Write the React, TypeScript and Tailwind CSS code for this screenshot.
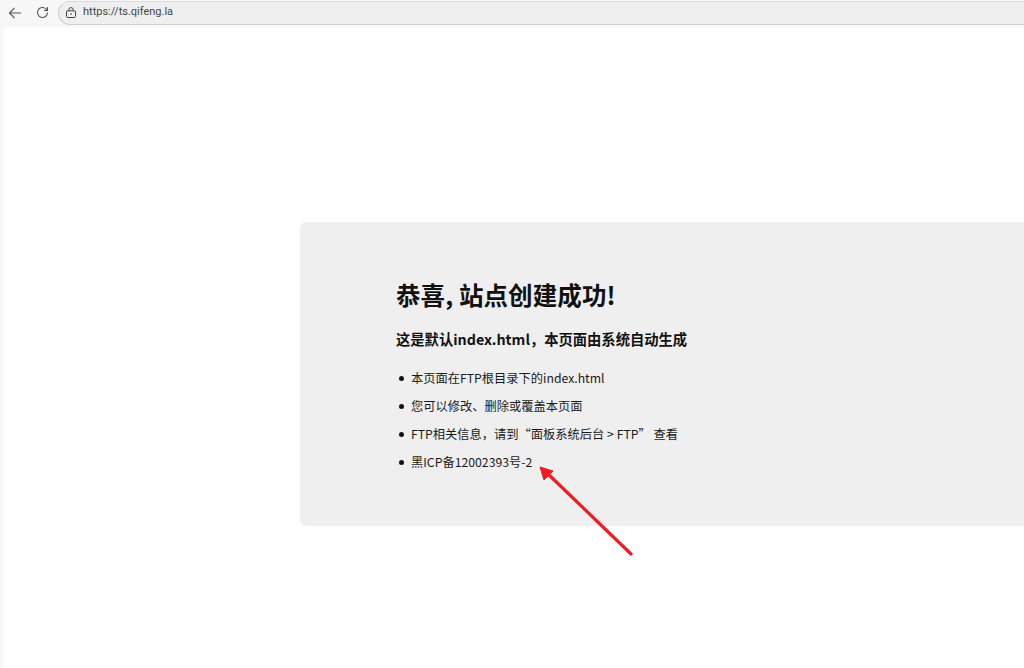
export default function App() {
  const items = [
    "本页面在FTP根目录下的index.html",
    "您可以修改、删除或覆盖本页面",
    "FTP相关信息，请到“面板系统后台 > FTP” 查看",
    "黑ICP备12002393号-2",
  ];
  return (
    <div className="relative flex h-[668px] w-[1024px] flex-col overflow-hidden bg-[#f7f7f7] font-['Noto_Sans_CJK_SC',sans-serif] text-[#111]">
      <div className="flex h-[27px] shrink-0 items-center">
        <svg className="ml-[8px] mt-[-1px] h-[14px] w-[14px] text-[#555]" viewBox="0 0 14 14" fill="none" stroke="currentColor" strokeWidth="1.1">
          <path d="M13 7H1.5M6.5 1.8 1.5 7l5 5.2" />
        </svg>
        <svg className="ml-[14px] mt-[-2px] h-[13px] w-[13px] text-[#555]" viewBox="0 0 13 13" fill="none" stroke="currentColor" strokeWidth="1.1">
          <path d="M11.5 6.5a5 5 0 1 1-1.5-3.6L11.5 4.5M11.5 1v3.5H8" />
        </svg>
        <div className="ml-[9px] mt-[-2px] flex h-[24px] flex-1 items-center rounded-l-full border border-[#cdcdcd] border-t-[#dcdcdc] border-r-0 bg-[#efefef] pl-[7px]">
          <svg className="h-[11px] w-[10px] text-[#444]" viewBox="0 0 10 11" fill="none" stroke="currentColor" strokeWidth="1">
            <rect x="0.5" y="3.8" width="9" height="6.7" rx="1.2" />
            <path d="M2.8 3.8V2.8a2.2 2.2 0 0 1 4.4 0v1" />
            <path d="M4 7h2" />
          </svg>
          <span className="ml-[7px] font-['Roboto',sans-serif] text-[11px] text-[#444]">https://ts.qifeng.la</span>
        </div>
      </div>
      <div className="ml-[3px] flex-1 rounded-tl-[6px] bg-white pl-[296.5px] pt-[195px]">
        <div className="h-[304px] w-[800px] rounded-[7px] bg-[#efefef] pl-[96.5px] pt-[55px] text-[12.25px] leading-[18px]">
          <h1 className="text-[24.5px] font-bold leading-[36px] tracking-[0.1px]">恭喜, 站点创建成功!</h1>
          <h2 className="mt-[15px] text-[14.3px] font-bold leading-[21px]">这是默认index.html，本页面由系统自动生成</h2>
          <ul className="mt-[20px] flex flex-col gap-[10px]">
            {items.map((t) => (
              <li key={t} className="flex items-center text-[#1a1a1a]">
                <span className="ml-[2.5px] mr-[7.5px] h-[5px] w-[5px] rounded-full bg-[#111]" />
                <span>{t}</span>
              </li>
            ))}
          </ul>
        </div>
      </div>
      <svg className="absolute left-[535px] top-[460px] h-[100px] w-[105px]" viewBox="0 0 105 100" fill="none">
        <path d="M96 94 12 13" stroke="#ee1c25" strokeWidth="3.2" strokeLinecap="round" />
        <path d="M5 7 18 11 9 20Z" fill="#ee1c25" stroke="#ee1c25" strokeLinejoin="round" />
      </svg>
    </div>
  );
}
